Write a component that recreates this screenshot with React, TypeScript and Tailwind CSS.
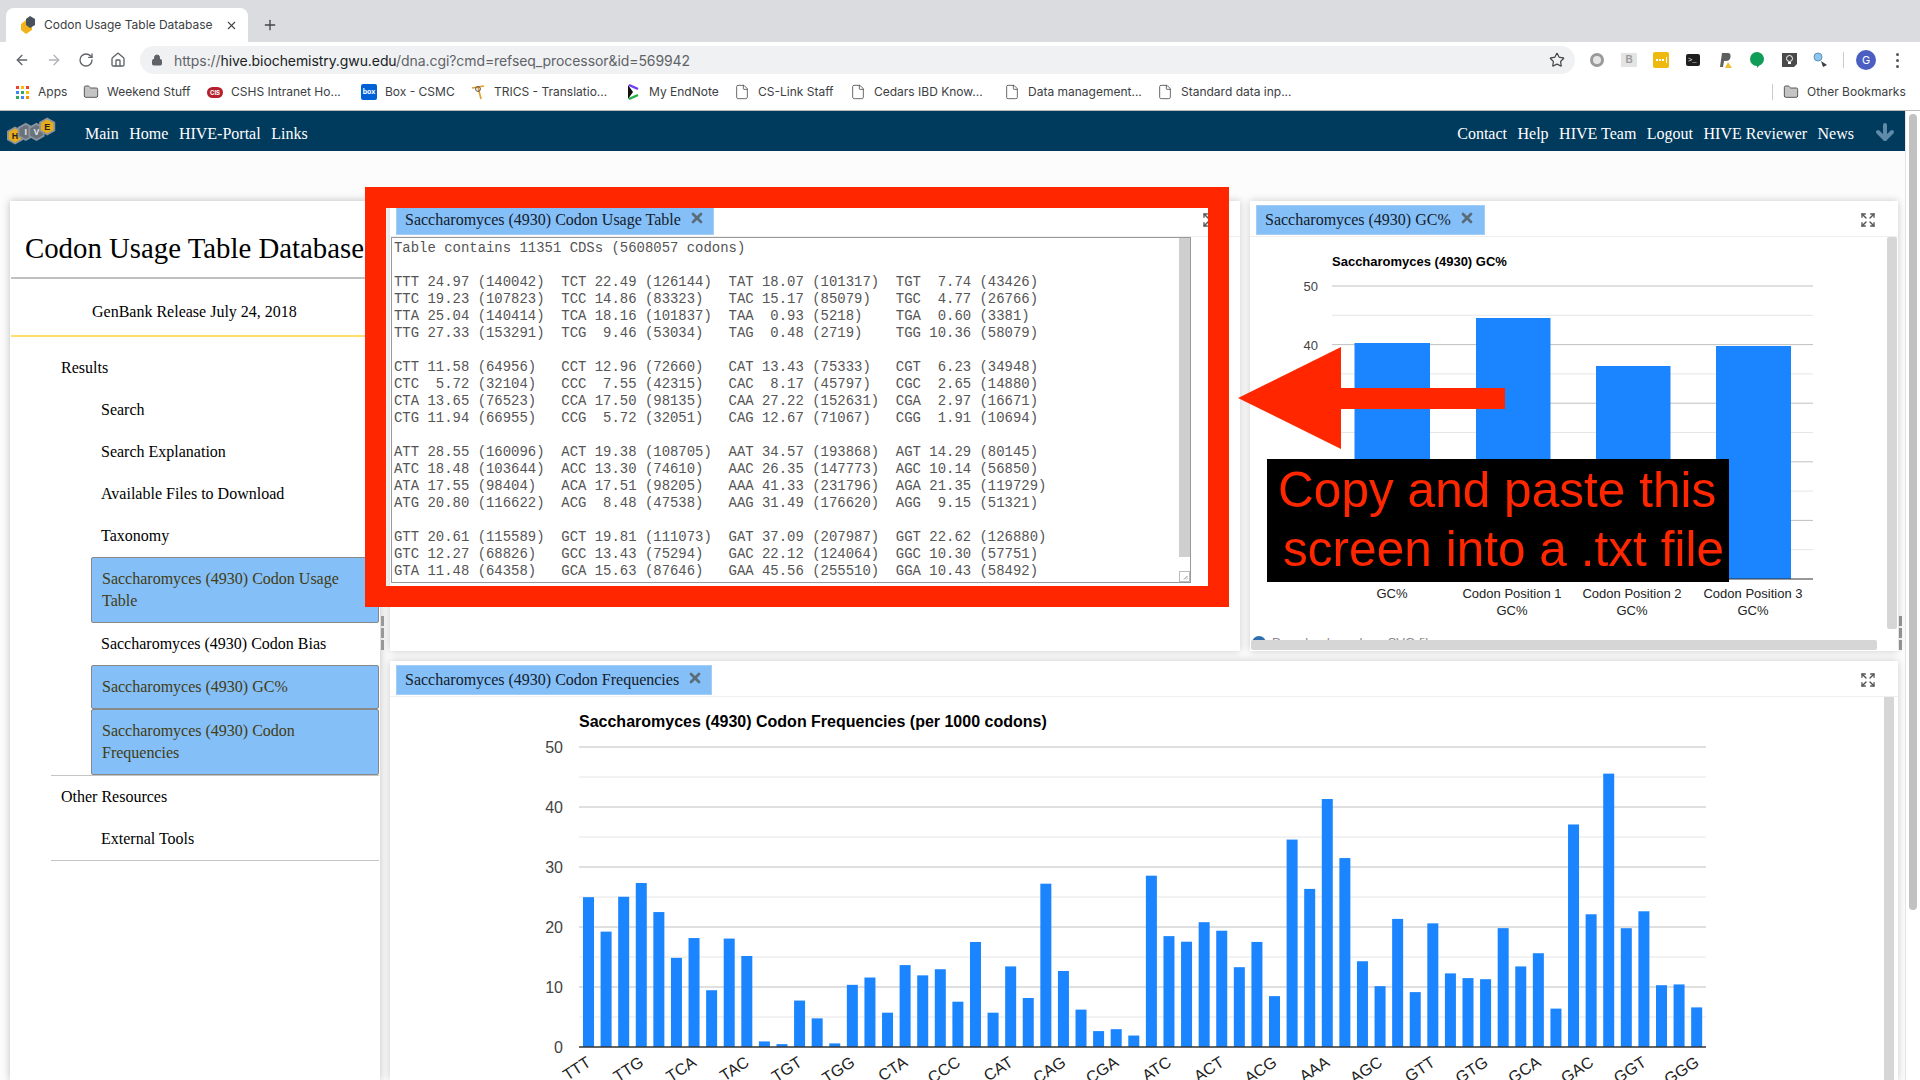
import { ArrowLeft, ArrowRight, RotateCw, Home, Lock, Star, Plus, X, Folder, File, Expand, ArrowDown } from 'lucide-react';

const TABLE = `Table contains 11351 CDSs (5608057 codons)

TTT 24.97 (140042)  TCT 22.49 (126144)  TAT 18.07 (101317)  TGT  7.74 (43426)
TTC 19.23 (107823)  TCC 14.86 (83323)   TAC 15.17 (85079)   TGC  4.77 (26766)
TTA 25.04 (140414)  TCA 18.16 (101837)  TAA  0.93 (5218)    TGA  0.60 (3381)
TTG 27.33 (153291)  TCG  9.46 (53034)   TAG  0.48 (2719)    TGG 10.36 (58079)

CTT 11.58 (64956)   CCT 12.96 (72660)   CAT 13.43 (75333)   CGT  6.23 (34948)
CTC  5.72 (32104)   CCC  7.55 (42315)   CAC  8.17 (45797)   CGC  2.65 (14880)
CTA 13.65 (76523)   CCA 17.50 (98135)   CAA 27.22 (152631)  CGA  2.97 (16671)
CTG 11.94 (66955)   CCG  5.72 (32051)   CAG 12.67 (71067)   CGG  1.91 (10694)

ATT 28.55 (160096)  ACT 19.38 (108705)  AAT 34.57 (193868)  AGT 14.29 (80145)
ATC 18.48 (103644)  ACC 13.30 (74610)   AAC 26.35 (147773)  AGC 10.14 (56850)
ATA 17.55 (98404)   ACA 17.51 (98205)   AAA 41.33 (231796)  AGA 21.35 (119729)
ATG 20.80 (116622)  ACG  8.48 (47538)   AAG 31.49 (176620)  AGG  9.15 (51321)

GTT 20.61 (115589)  GCT 19.81 (111073)  GAT 37.09 (207987)  GGT 22.62 (126880)
GTC 12.27 (68826)   GCC 13.43 (75294)   GAC 22.12 (124064)  GGC 10.30 (57751)
GTA 11.48 (64358)   GCA 15.63 (87646)   GAA 45.56 (255510)  GGA 10.43 (58492)`;

const FREQ = [
  24.97, 19.23, 25.04, 27.33, 22.49, 14.86, 18.16, 9.46, 18.07, 15.17, 0.93, 0.48, 7.74, 4.77, 0.6, 10.36,
  11.58, 5.72, 13.65, 11.94, 12.96, 7.55, 17.5, 5.72, 13.43, 8.17, 27.22, 12.67, 6.23, 2.65, 2.97, 1.91,
  28.55, 18.48, 17.55, 20.8, 19.38, 13.3, 17.51, 8.48, 34.57, 26.35, 41.33, 31.49, 14.29, 10.14, 21.35, 9.15,
  20.61, 12.27, 11.48, 11.3, 19.81, 13.43, 15.63, 6.4, 37.09, 22.12, 45.56, 19.8, 22.62, 10.3, 10.43, 6.6,
];
const FREQ_LABELS = ['TTT', 'TTG', 'TCA', 'TAC', 'TGT', 'TGG', 'CTA', 'CCC', 'CAT', 'CAG', 'CGA', 'ATC', 'ACT', 'ACG', 'AAA', 'AGC', 'GTT', 'GTG', 'GCA', 'GAC', 'GGT', 'GGG'];

const SANS = 'font-["Inter",sans-serif]';
const SERIF = 'font-["Liberation_Serif",serif]';

function HexLogo() {
  const hexes = [
    { x: 9, y: 21, fill: '#e8ad1c', l: 'H', c: '#222' },
    { x: 21, y: 17, fill: '#6a737c', l: 'I', c: '#e5e5e5' },
    { x: 33, y: 17, fill: '#6a737c', l: 'V', c: '#e5e5e5' },
    { x: 45, y: 11, fill: '#e8ad1c', l: 'E', c: '#222' },
  ];
  return (
    <svg width="50" height="30" viewBox="0 0 56 32">
      {hexes.map((h) => (
        <g key={h.l}>
          <polygon
            points={`${h.x},${h.y - 9} ${h.x + 8},${h.y - 4.5} ${h.x + 8},${h.y + 4.5} ${h.x},${h.y + 9} ${h.x - 8},${h.y + 4.5} ${h.x - 8},${h.y - 4.5}`}
            fill={h.fill}
            stroke="#8b949c"
            strokeWidth="2"
          />
          <text x={h.x} y={h.y + 3.5} fontSize="10" fontWeight="700" textAnchor="middle" fill={h.c} fontFamily="Liberation Sans">
            {h.l}
          </text>
        </g>
      ))}
    </svg>
  );
}

function Favicon() {
  return (
    <svg width="16" height="18" viewBox="0 0 16 18">
      <polygon points="6,4 12,8 12,14 6,18 1,14 1,8" fill="#f1b31c" />
      <polygon points="10,0 15,3 15,9 10,12 6,9 6,3" fill="#47525c" />
    </svg>
  );
}

function Bookmark({ icon, label, className }: { icon: React.ReactNode; label: string; className: string }) {
  return (
    <div className={`flex items-center shrink-0 ${className}`}>
      <div className="w-[16px] h-[16px] flex items-center justify-center mr-[8px]">{icon}</div>
      <span className="text-[12px] text-[#3c4043] whitespace-nowrap">{label}</span>
    </div>
  );
}

function FolderIcon() {
  return <Folder size={16} strokeWidth={1.3} fill="#c4c4c4" color="#444" />;
}

function PageIcon() {
  return <File size={16} strokeWidth={1.2} color="#444" />;
}

function AppsIcon() {
  const colors = ['#ea4335', '#fbbc04', '#ea4335', '#4285f4', '#34a853', '#fbbc04', '#34a853', '#4285f4', '#fb8c00'];
  return (
    <div className="grid grid-cols-3 gap-[2px] w-[13px]">
      {colors.map((c, i) => (
        <div key={i} className="w-[3px] h-[3px]" style={{ backgroundColor: c }} />
      ))}
    </div>
  );
}

function Extensions() {
  return (
    <div className="flex items-center h-full">
      <div className="w-[32px] flex justify-center">
        <div className="w-[14px] h-[14px] rounded-full border-[3px] border-[#9a9a9a] bg-[#e5e5e5]" />
      </div>
      <div className="w-[32px] flex justify-center">
        <div className="w-[16px] h-[14px] bg-[#e4e4e4] text-[#9b9b9b] text-[10px] font-bold leading-[14px] text-center font-['Liberation_Sans',sans-serif]">B</div>
      </div>
      <div className="w-[32px] flex justify-center">
        <div className="w-[16px] h-[16px] rounded-[2px] bg-[#f0b90f] flex items-center justify-center gap-[1px]">
          {[0, 1, 2].map((i) => (
            <div key={i} className="w-[2px] h-[2px] bg-white" />
          ))}
          <div className="w-[1px] h-[6px] bg-white ml-[1px]" />
        </div>
      </div>
      <div className="w-[32px] flex justify-center">
        <div className="w-[14px] h-[12px] rounded-[2px] bg-[#1f1f1f] text-white text-[7px] leading-[12px] pl-[2px] font-['Liberation_Mono',monospace]">&gt;_</div>
      </div>
      <div className="w-[32px] flex justify-center">
        <svg width="14" height="16" viewBox="0 0 14 16">
          <path d="M2 15 L4 1 H10 Q13 1 12.5 5 Q12 9 8 9 H6 L5 15 Z" fill="#5f5f5f" />
          <polygon points="10,10 14,16 7,16" fill="#eebf2e" />
        </svg>
      </div>
      <div className="w-[32px] flex justify-center">
        <svg width="14" height="16" viewBox="0 0 14 16">
          <path d="M7 0 A7 7 0 0 1 9 13.7 L7 16 V14 A7 7 0 0 1 7 0 Z" fill="#0f9d58" />
        </svg>
      </div>
      <div className="w-[32px] flex justify-center">
        <svg width="15" height="16" viewBox="0 0 15 16">
          <path d="M0 1 H15 V12 L12 15 H0 Z" fill="#4a4a4a" />
          <circle cx="7.5" cy="6.5" r="3" fill="none" stroke="#fff" />
          <rect x="6" y="10" width="3" height="2" fill="#fff" />
        </svg>
      </div>
      <div className="w-[32px] flex justify-center">
        <svg width="16" height="16" viewBox="0 0 16 16">
          <circle cx="5" cy="5" r="4" fill="#8fc6ee" stroke="#5f93bb" />
          <path d="M8 9 L14 13 L10 15 Z" fill="#33404c" />
        </svg>
      </div>
    </div>
  );
}

function BrowserChrome() {
  return (
    <div className={SANS}>
      <div className="h-[42px] bg-[#dadce0] flex items-end pl-[6px]">
        <div className="w-[242px] h-[34px] bg-white rounded-t-[8px] flex items-center pl-[14px] pr-[10px]">
          <Favicon />
          <span className="ml-[8px] text-[12px] text-[#3c4043] whitespace-nowrap">Codon Usage Table Database</span>
          <X size={13} className="ml-auto text-[#444]" />
        </div>
        <Plus size={16} strokeWidth={2} className="ml-[14px] mb-[9px] text-[#444]" />
      </div>
      <div className="h-[32px] bg-white flex items-start">
        <div className="w-[140px] h-[28px] mt-[4px] flex items-center pl-[14px] gap-[16px] text-[#5f6368]">
          <ArrowLeft size={16} strokeWidth={2} />
          <ArrowRight size={16} strokeWidth={2} className="text-[#b0b3b8]" />
          <RotateCw size={16} strokeWidth={2} />
          <Home size={16} strokeWidth={2} />
        </div>
        <div className="w-[1435px] h-[28px] mt-[4px] rounded-full bg-[#eff1f3] flex items-center pl-[11px] pr-[10px]">
          <Lock size={12} fill="#5f6368" className="text-[#5f6368]" />
          <span className="ml-[11px] text-[14px] whitespace-nowrap text-[#5f6368] tracking-[-0.08px]">
            https://<span className="text-[#202124]">hive.biochemistry.gwu.edu</span>/dna.cgi?cmd=refseq_processor&amp;id=569942
          </span>
          <Star size={16} strokeWidth={1.8} className="ml-auto text-[#444]" />
        </div>
        <div className="h-[28px] mt-[4px] flex items-center ml-[6px]">
          <Extensions />
          <div className="w-px h-[16px] bg-[#ccc] ml-[6px]" />
          <div className="w-[20px] h-[20px] rounded-full bg-[#4a5fc1] text-white text-[11px] flex items-center justify-center ml-[12px]">G</div>
          <div className="flex flex-col gap-[3px] ml-[20px]">
            <div className="w-[3px] h-[3px] rounded-full bg-[#555]" />
            <div className="w-[3px] h-[3px] rounded-full bg-[#555]" />
            <div className="w-[3px] h-[3px] rounded-full bg-[#555]" />
          </div>
        </div>
      </div>
      <div className="h-[37px] bg-white border-b border-[#bbbbbb] flex items-center pl-[14px]">
        <Bookmark className="w-[69px]" icon={<AppsIcon />} label="Apps" />
        <Bookmark className="w-[124px]" icon={<FolderIcon />} label="Weekend Stuff" />
        <Bookmark
          className="w-[154px]"
          icon={<div className="w-[16px] h-[11px] rounded-full bg-[#b5202e] text-white text-[6px] font-bold text-center leading-[11px]">CIS</div>}
          label="CSHS Intranet Ho..."
        />
        <Bookmark
          className="w-[109px]"
          icon={<div className="w-[16px] h-[16px] rounded-[2px] bg-[#0061d5] text-white text-[7px] font-bold text-center leading-[16px]">box</div>}
          label="Box - CSMC"
        />
        <Bookmark
          className="w-[155px]"
          icon={
            <svg width="16" height="16" viewBox="0 0 16 16">
              <path d="M2 4 L14 2 M8 3 L11 15" stroke="#e39a2a" strokeWidth="1.6" fill="none" />
              <circle cx="8" cy="5" r="2.4" fill="none" stroke="#555" />
            </svg>
          }
          label="TRICS - Translatio..."
        />
        <Bookmark
          className="w-[109px]"
          icon={
            <svg width="14" height="16" viewBox="0 0 14 16">
              <path d="M3 1 L12 5" stroke="#6d3bf5" strokeWidth="2.4" />
              <path d="M3 15 L12 11" stroke="#1fb141" strokeWidth="2.4" />
              <path d="M2 1 V15 L7 8 Z" fill="#111" />
            </svg>
          }
          label="My EndNote"
        />
        <Bookmark className="w-[116px]" icon={<PageIcon />} label="CS-Link Staff" />
        <Bookmark className="w-[154px]" icon={<PageIcon />} label="Cedars IBD Know..." />
        <Bookmark className="w-[153px]" icon={<PageIcon />} label="Data management..." />
        <Bookmark className="w-[135px]" icon={<PageIcon />} label="Standard data inp..." />
        <div className="ml-auto w-px h-[16px] bg-[#ccc] mr-[10px]" />
        <Bookmark className="w-[137px]" icon={<FolderIcon />} label="Other Bookmarks" />
      </div>
    </div>
  );
}

function TopNav() {
  return (
    <div className={`h-[40px] bg-[#003a5c] flex items-center text-white text-[16px] ${SERIF}`}>
      <div className="w-[85px] pl-[7px]">
        <HexLogo />
      </div>
      <div className="flex gap-[10.5px] pt-[5px]">
        <span>Main</span>
        <span>Home</span>
        <span>HIVE-Portal</span>
        <span>Links</span>
      </div>
      <div className="ml-auto flex items-center gap-[10.5px] pr-[8px] pt-[5px]">
        <span>Contact</span>
        <span>Help</span>
        <span>HIVE Team</span>
        <span>Logout</span>
        <span>HIVE Reviewer</span>
        <span>News</span>
        <ArrowDown size={24} strokeWidth={4} className="ml-[8.5px] -mt-[4px] text-[#5f8aa8]" />
      </div>
    </div>
  );
}

function NavText({ indent, children }: { indent: string; children: React.ReactNode }) {
  return <div className={`h-[42px] flex items-center ${indent}`}>{children}</div>;
}

function BlueItem({ children, h }: { children: React.ReactNode; h: string }) {
  return (
    <div className={`ml-[81px] w-[288px] ${h} bg-[#84bff7] border border-[#888888] rounded-[2px] px-[10px] flex items-center text-[#423c14] leading-[22px]`}>
      <span>{children}</span>
    </div>
  );
}

function Sidebar() {
  return (
    <div className={`w-[370px] h-full shrink-0 bg-white shadow-[0_0_8px_rgba(0,0,0,0.25)] text-[16px] text-black ${SERIF}`}>
      <div className="ml-px h-[78px] border-b-2 border-[#c0c0c0] flex items-center pl-[14px] pt-[18px] overflow-visible">
        <span className="text-[28.8px] whitespace-nowrap leading-none">Codon Usage Table Database</span>
      </div>
      <div className="ml-px h-[58px] border-b-2 border-[#ffdd66] flex items-center pl-[81px] pt-[9px]">GenBank Release July 24, 2018</div>
      <div className="pt-[10px]">
        <NavText indent="pl-[51px]">Results</NavText>
        <NavText indent="pl-[91px]">Search</NavText>
        <NavText indent="pl-[91px]">Search Explanation</NavText>
        <NavText indent="pl-[91px]">Available Files to Download</NavText>
        <NavText indent="pl-[91px]">Taxonomy</NavText>
        <BlueItem h="h-[66px]">Saccharomyces (4930) Codon Usage Table</BlueItem>
        <NavText indent="pl-[91px]">Saccharomyces (4930) Codon Bias</NavText>
        <BlueItem h="h-[44px]">Saccharomyces (4930) GC%</BlueItem>
        <BlueItem h="h-[66px]">Saccharomyces (4930) Codon Frequencies</BlueItem>
        <div className="ml-[41px] w-[328px] border-y border-[#c4c4c4]">
          <NavText indent="pl-[10px]">Other Resources</NavText>
          <NavText indent="pl-[50px]">External Tools</NavText>
        </div>
      </div>
    </div>
  );
}

function Gutter() {
  return (
    <div className="w-[10px] shrink-0 flex flex-col gap-[2px] pt-[415px] pl-px">
      {[0, 1, 2].map((i) => (
        <div key={i} className="w-[3px] h-[10px] bg-[#999999]" />
      ))}
    </div>
  );
}

function TabHeader({ title, w }: { title: string; w: string }) {
  return (
    <div className="h-[36px] shrink-0 border-b border-[#efefef] pl-[6px] pt-[4px] flex items-start justify-between pr-[22px]">
      <div className={`${w} h-[30px] bg-[#84bff7] border border-[#a3cdf5] flex items-center pl-[8px] text-[16px] text-[#14202c] ${SERIF}`}>
        <span className="whitespace-nowrap">{title}</span>
        <X size={16} strokeWidth={4} className="ml-[8px] -mt-[5px] text-[#5a6b7a]" />
      </div>
      <Expand size={16} strokeWidth={2} className="mt-[7px] text-[#555555]" />
    </div>
  );
}

function TableCard() {
  return (
    <div className="w-[850px] h-[450px] mr-[10px] shrink-0 bg-white shadow-[0_0_8px_rgba(0,0,0,0.2)] flex flex-col">
      <TabHeader title="Saccharomyces (4930) Codon Usage Table" w="w-[318px]" />
      <div className="ml-[1px] w-[800px] h-[346px] border border-[#999999] relative overflow-hidden bg-white">
        <pre className="pl-[2px] pt-[2px] font-['Liberation_Mono',monospace] text-[13.95px] leading-[17px] text-[#555555]">{TABLE}</pre>
        <div className="absolute right-0 top-0 w-[11px] h-[319px] bg-[#cfcfcf]" />
        <svg className="absolute right-0 bottom-0 border border-[#bbbbbb] bg-white" width="11" height="11" viewBox="0 0 11 11">
          <path d="M9 5 L5 9 M9 8 L8 9" stroke="#666" fill="none" />
        </svg>
      </div>
    </div>
  );
}

function GcChart() {
  const bars = [
    { x: 104.5, top: 106, w: 75.5 },
    { x: 226, top: 81, w: 74.5 },
    { x: 346, top: 129, w: 74.5 },
    { x: 466, top: 109, w: 75 },
  ];
  const y0 = 342;
  const grid = [0, 5, 10, 15, 20, 25, 30, 35, 40, 45];
  const labels: [number, string[]][] = [
    [142, ['GC%']],
    [262, ['Codon Position 1', 'GC%']],
    [382, ['Codon Position 2', 'GC%']],
    [503, ['Codon Position 3', 'GC%']],
  ];
  return (
    <svg width="637" height="397" className="block shrink-0 font-['Liberation_Sans',sans-serif]">
      <text x="82" y="29" fontSize="13" fontWeight="700" fill="#000">Saccharomyces (4930) GC%</text>
      {grid.map((v, i) => (
        <line key={v} x1="82" x2="563" y1={49 + 29.3 * i} y2={49 + 29.3 * i} stroke={i % 2 === 0 ? '#c0c0c0' : '#e6e6e6'} />
      ))}
      <text x="68" y="54" fontSize="13" textAnchor="end" fill="#444">50</text>
      <text x="68" y="113" fontSize="13" textAnchor="end" fill="#444">40</text>
      {bars.map((b) => (
        <rect key={b.x} x={b.x} y={b.top} width={b.w} height={y0 - b.top} fill="#1a85ff" />
      ))}
      <line x1="82" x2="563" y1={y0} y2={y0} stroke="#333" />
      {labels.map(([x, lines]) =>
        lines.map((l, i) => (
          <text key={x + l} x={x} y={361 + i * 17} fontSize="13" textAnchor="middle" fill="#222">{l}</text>
        )),
      )}
    </svg>
  );
}

function GcCard() {
  return (
    <div className="w-[648px] h-[450px] shrink-0 bg-white shadow-[0_0_8px_rgba(0,0,0,0.2)] flex flex-col relative overflow-hidden">
      <TabHeader title="Saccharomyces (4930) GC%" w="w-[229px]" />
      <GcChart />
      <div className="flex items-center gap-[6px] pl-[2px] -mt-[1px] font-['Liberation_Sans',sans-serif] text-[13px] text-[#888888]">
        <div className="w-[14px] h-[14px] rounded-full bg-[#2f6fb0]" />
        <span>Download graph as SVG file</span>
      </div>
      <div className="absolute left-px bottom-px w-[626px] h-[10px] rounded-[2px] bg-[#d6d6d6]" />
      <div className="absolute right-px top-[36px] w-[10px] h-[392px] rounded-[2px] bg-[#d6d6d6]" />
    </div>
  );
}

function FreqChart() {
  const y0 = 350;
  return (
    <svg width="1400" height="384" className="block font-['Liberation_Sans',sans-serif]">
      <text x="189" y="30" fontSize="16" fontWeight="700" fill="#000">Saccharomyces (4930) Codon Frequencies (per 1000 codons)</text>
      {Array.from({ length: 10 }, (_, i) => (
        <line key={i} x1="189" x2="1316" y1={50 + i * 30} y2={50 + i * 30} stroke={i % 2 === 0 ? '#c0c0c0' : '#e6e6e6'} />
      ))}
      {[50, 40, 30, 20, 10, 0].map((v, i) => (
        <text key={v} x="173" y={56 + i * 60} fontSize="16" textAnchor="end" fill="#444">{v}</text>
      ))}
      {FREQ.map((v, i) => (
        <rect key={i} x={193 + 17.59 * i} y={y0 - v * 6} width="11" height={v * 6} fill="#1a85ff" />
      ))}
      <line x1="189" x2="1316" y1={y0} y2={y0} stroke="#333" strokeWidth="1.5" />
      {FREQ_LABELS.map((l, i) => {
        const x = 202 + 17.59 * i * 3;
        return (
          <text key={l} x={x} y="368" fontSize="16" textAnchor="end" fill="#222" transform={`rotate(-33 ${x} 368)`}>{l}</text>
        );
      })}
    </svg>
  );
}

function FreqCard() {
  return (
    <div className="w-[1508px] h-[419px] mt-[10px] bg-white shadow-[0_0_8px_rgba(0,0,0,0.2)] relative overflow-hidden">
      <TabHeader title="Saccharomyces (4930) Codon Frequencies" w="w-[316px]" />
      <FreqChart />
      <div className="absolute right-[4px] top-[36px] bottom-0 w-[10px] bg-[#d6d6d6]" />
    </div>
  );
}

// Red annotations drawn on top of the screenshot
function Annotations() {
  return (
    <>
      <div className="absolute left-[365px] top-[187px] w-[864px] h-[420px] border-[21px] border-[#ff2600]" />
      <svg className="absolute left-[1238px] top-[347px]" width="268" height="103">
        <polygon points="0,51 103,0 103,41 267,41 267,62 103,62 103,102" fill="#ff2600" />
      </svg>
      <div className="absolute left-[1267px] top-[459px] w-[462px] h-[123px] pt-[2px] bg-black text-[#ff2600] text-[49.6px] leading-[59px] font-['Liberation_Sans',sans-serif] whitespace-nowrap overflow-hidden">
        <div className="pl-[11px]">Copy and paste this</div>
        <div className="pl-[16px]">screen into a .txt file</div>
      </div>
    </>
  );
}

export default function App() {
  return (
    <div className="relative w-[1920px] h-[1080px] overflow-hidden bg-[#fcfcfc]">
      <BrowserChrome />
      <div className="flex h-[969px]">
        <div className="w-[1905px] shrink-0 flex flex-col">
          <TopNav />
          <div className="flex-1 flex pl-[10px] pt-[50px] min-h-0">
            <Sidebar />
            <Gutter />
            <div className="flex flex-col">
              <div className="flex">
                <TableCard />
                <GcCard />
                <Gutter />
              </div>
              <FreqCard />
            </div>
          </div>
        </div>
        <div className="w-[15px] shrink-0 bg-white border-l border-[#e5e5e5] pt-[3px] pl-[3px]">
          <div className="w-[8px] h-[796px] rounded-full bg-[#c1c1c1]" />
        </div>
      </div>
      <Annotations />
    </div>
  );
}
